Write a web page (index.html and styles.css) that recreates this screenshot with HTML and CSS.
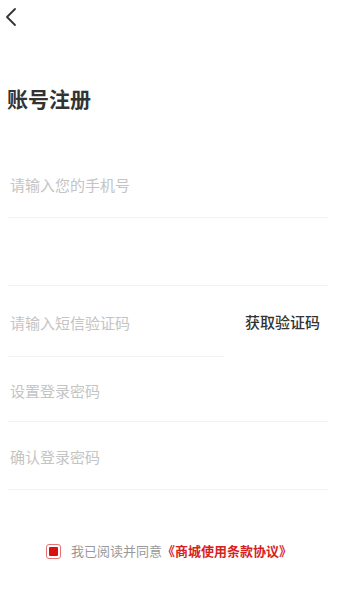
FILE: index.html
```html
<!DOCTYPE html>
<html lang="zh-CN">

<head>
    <meta charset="UTF-8" />
    <meta name="viewport" content="width=device-width, initial-scale=1.0" />
    <title>账号注册</title>
    <link rel="stylesheet" href="styles.css">
</head>

<body>
    <div class="fanhui">
        <svg width="14" height="20" viewBox="0 0 14 20">
            <path d="M11 2 L3 10 L11 18" fill="none" stroke="#333" stroke-width="1.8" stroke-linecap="round" stroke-linejoin="round" />
        </svg>
    </div>

    <h1 class="biaoti">账号注册</h1>

    <form class="biaodan">
        <div class="hang h1">
            <input type="tel" placeholder="请输入您的手机号">
        </div>
        <div class="hang h2"></div>
        <div class="hang h3 yanzheng">
            <div class="shuru">
                <input type="text" placeholder="请输入短信验证码">
            </div>
            <span class="huoqu">获取验证码</span>
        </div>
        <div class="hang h4">
            <input type="password" placeholder="设置登录密码">
        </div>
        <div class="hang h5">
            <input type="password" placeholder="确认登录密码">
        </div>
    </form>

    <div class="xieyi">
        <span class="gouxuan"><i></i></span>
        <span class="wenzi">我已阅读并同意</span>
        <a class="lianjie">《商城使用条款协议》</a>
    </div>
</body>

</html>
```

FILE: styles.css
```css
body {
    margin: 0;
    background: #fff;
    font-family: "Noto Sans CJK SC", "Noto Sans", sans-serif;
    color: #333;
}

.fanhui {
    height: 34px;
    display: flex;
    align-items: center;
    padding-left: 4px;
}

.biaoti {
    margin: 49px 0 0 7px;
    font-size: 21px;
    line-height: 30px;
    font-weight: bold;
    color: #333;
}

.biaodan {
    margin: 37px 14px 0 8px;
}

.hang {
    display: flex;
    align-items: center;
    border-bottom: 1px solid #f2f2f2;
}

.hang input {
    border: none;
    outline: none;
    width: 100%;
    padding: 2px 2px 0;
    font-family: inherit;
    font-size: 15px;
    color: #333;
    background: transparent;
}

.hang input::placeholder {
    color: #c4c4c4;
}

.h1 { height: 67px; }
.h2 { height: 67px; }
.h4 { height: 64px; }
.h5 { height: 67px; }

.yanzheng {
    height: 71px;
    border-bottom: none;
    align-items: stretch;
}

.yanzheng .shuru {
    width: 216px;
    display: flex;
    align-items: center;
    border-bottom: 1px solid #f2f2f2;
}

.huoqu {
    flex: 1;
    text-align: right;
    align-self: center;
    padding-right: 8px;
    font-size: 15px;
    color: #333;
    font-weight: 500;
}

.xieyi {
    margin-top: 53px;
    display: flex;
    align-items: center;
    justify-content: center;
    font-size: 13px;
    line-height: 16px;
    padding-right: 4px;
}

.gouxuan {
    width: 13px;
    height: 13px;
    border: 1px solid #e57373;
    border-radius: 3px;
    display: flex;
    align-items: center;
    justify-content: center;
    margin-right: 10px;
}

.gouxuan i {
    width: 9px;
    height: 9px;
    background: #d91010;
    border-radius: 1px;
}

.wenzi {
    color: #999;
}

.lianjie {
    color: #d81e1e;
    font-weight: bold;
}
```
